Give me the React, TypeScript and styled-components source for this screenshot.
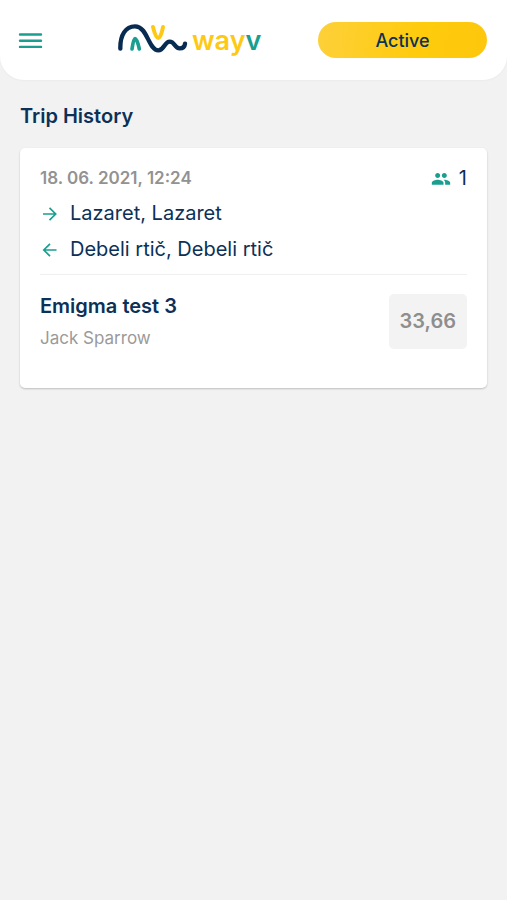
import React from "react";
import styled, { createGlobalStyle } from "styled-components";

const navy = "#0b3158";
const teal = "#1a9e90";
const gold = "#fdc914";

const GlobalStyle = createGlobalStyle`
  *, *::before, *::after { box-sizing: border-box; }
  body {
    margin: 0;
    background: #f2f2f2;
    color: ${navy};
    font-family: Inter, "Open Sans", sans-serif;
  }
  h1, h2, p, ul { margin: 0; padding: 0; }
  button { font: inherit; color: inherit; border: 0; cursor: pointer; }
`;

const Header = styled.header`
  display: grid;
  grid-template-columns: 100px 1fr 169px;
  align-items: center;
  min-height: 80px;
  padding: 0 20px 0 18px;
  background: #fff;
  border-radius: 0 0 24px 24px;
  box-shadow: 0 1px 2px rgba(0, 0, 0, 0.03);
`;

const MenuButton = styled.button`
  display: flex;
  justify-self: start;
  padding: 0;
  background: none;
`;

const Logo = styled.a`
  display: flex;
  align-items: center;
  justify-self: start;
  gap: 4px;
  height: 48px;
  text-decoration: none;
`;

const Wordmark = styled.span`
  padding-top: 2px;
  color: ${gold};
  font-size: 27px;
  font-weight: 600;
  line-height: 32px;
`;

const WordmarkEnd = styled.span`
  color: ${teal};
`;

const StatusButton = styled.button`
  height: 36px;
  border-radius: 18px;
  background: linear-gradient(100deg, #fdd03a, #ffcb0c 60%, #fdc70c);
  font-size: 18px;
  font-weight: 500;
`;

const Main = styled.main`
  display: flex;
  flex-direction: column;
  gap: 20px;
  padding: 24px 20px;
`;

const PageTitle = styled.h1`
  font-size: 20px;
  font-weight: 600;
  line-height: 24px;
`;

const TripCard = styled.article`
  padding: 16px 20px 30px;
  background: #fff;
  border-radius: 5px;
  box-shadow: 0 1px 2px rgba(0, 0, 0, 0.22);
`;

const Row = styled.div`
  display: flex;
  align-items: center;
  justify-content: space-between;
`;

const TripDate = styled.time`
  color: #929292;
  font-size: 17px;
  font-weight: 600;
  line-height: 28px;
`;

const Passengers = styled.span`
  display: flex;
  align-items: center;
  gap: 8px;
  font-size: 20px;
  line-height: 28px;
`;

const Stops = styled.ul`
  padding: 3px 0 7px;
  border-bottom: 1px solid #efefef;
  list-style: none;
`;

const Stop = styled.li`
  display: flex;
  align-items: center;
  gap: 11px;
  font-size: 20px;
  line-height: 36px;
`;

const Booking = styled(Row)`
  align-items: flex-start;
  padding-top: 19px;
`;

const TripName = styled.h2`
  font-size: 20px;
  font-weight: 600;
  line-height: 24px;
`;

const Driver = styled.p`
  color: #9a9a9a;
  font-size: 17px;
  line-height: 40px;
`;

const Price = styled.span`
  padding: 0 11px;
  border-radius: 5px;
  background: #f3f3f3;
  color: #8e8e8e;
  font-size: 20px;
  font-weight: 600;
  line-height: 55px;
`;

const MenuIcon = () => (
  <svg width="25" height="20" viewBox="0 0 25 20" stroke={teal} strokeWidth="2.4" strokeLinecap="round" aria-hidden="true">
    <path d="M2 4.5H23M2 10.7H23M2 16.9H23" />
  </svg>
);

const WaveMark = () => (
  <svg width="70" height="36" viewBox="26 24 210 108" fill="none" strokeLinecap="round" aria-hidden="true">
    <path
      stroke="#082b52"
      strokeWidth="13"
      d="M33 104C32 63 49 37 77 37C115 37 117 109 147 109C165 109 165 83 181 83C197 83 195 103 211 103C220 103 226 98 227 89"
    />
    <path stroke={teal} strokeWidth="11" d="M68 105C70 91 73 74 77 74C82 74 87 91 90 105" />
    <path stroke={gold} strokeWidth="12" d="M131 39C135 55 141 72 147 72C153 72 158 55 161 39" />
  </svg>
);

const ArrowIcon = ({ back = false }: { back?: boolean }) => (
  <svg width="19" height="20" viewBox="0 0 19 20" fill="none" stroke={teal} strokeWidth="1.7" aria-hidden="true">
    <path d={back ? "M16.5 11H4M10 4.8L3.8 11L10 17.2" : "M3 11H15.5M9.5 4.8L15.7 11L9.5 17.2"} />
  </svg>
);

const PeopleIcon = () => (
  <svg width="20" height="20" viewBox="0 -1 24 24" fill={teal} aria-hidden="true">
    <path d="M16 11c1.66 0 2.99-1.34 2.99-3S17.66 5 16 5c-1.66 0-3 1.34-3 3s1.34 3 3 3zm-8 0c1.66 0 2.99-1.34 2.99-3S9.66 5 8 5C6.34 5 5 6.34 5 8s1.34 3 3 3zm0 2c-2.33 0-7 1.17-7 3.5V19h14v-2.5c0-2.33-4.67-3.5-7-3.5zm8 0c-.29 0-.62.02-.97.05 1.16.84 1.97 1.97 1.97 3.45V19h6v-2.5c0-2.33-4.67-3.5-7-3.5z" />
  </svg>
);

export default function App() {
  return (
    <>
      <GlobalStyle />
      <Header>
        <MenuButton aria-label="Menu">
          <MenuIcon />
        </MenuButton>
        <Logo href="#">
          <WaveMark />
          <Wordmark>
            way<WordmarkEnd>v</WordmarkEnd>
          </Wordmark>
        </Logo>
        <StatusButton>Active</StatusButton>
      </Header>
      <Main>
        <PageTitle>Trip History</PageTitle>
        <TripCard>
          <Row>
            <TripDate dateTime="2021-06-18T12:24">18. 06. 2021, 12:24</TripDate>
            <Passengers>
              <PeopleIcon />1
            </Passengers>
          </Row>
          <Stops>
            <Stop>
              <ArrowIcon />
              Lazaret, Lazaret
            </Stop>
            <Stop>
              <ArrowIcon back />
              Debeli rtič, Debeli rtič
            </Stop>
          </Stops>
          <Booking>
            <div>
              <TripName>Emigma test 3</TripName>
              <Driver>Jack Sparrow</Driver>
            </div>
            <Price>33,66</Price>
          </Booking>
        </TripCard>
      </Main>
    </>
  );
}
